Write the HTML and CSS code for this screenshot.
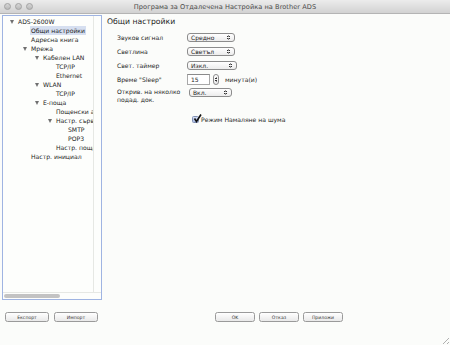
FILE: index.html
```html
<!DOCTYPE html>
<html lang="bg">

<head>
    <meta charset="UTF-8">
    <title>Програма за Отдалечена Настройка на Brother ADS</title>
    <link rel="stylesheet" href="styles.css">
</head>

<body>
    <div class="window">
        <header class="titlebar">
            <div class="lights">
                <span></span><span></span><span></span>
            </div>
            <h1>Програма за Отдалечена Настройка на Brother ADS</h1>
        </header>

        <div class="main">
            <section class="tree">
                <div class="tree-view">
                    <ul>
                        <li class="lvl0 open">ADS-2600W</li>
                        <li class="lvl1 selected">Общи настройки</li>
                        <li class="lvl1">Адресна книга</li>
                        <li class="lvl1 open">Мрежа</li>
                        <li class="lvl2 open">Кабелен LAN</li>
                        <li class="lvl3">TCP/IP</li>
                        <li class="lvl3">Ethernet</li>
                        <li class="lvl2 open">WLAN</li>
                        <li class="lvl3">TCP/IP</li>
                        <li class="lvl2 open">E-поща</li>
                        <li class="lvl3">Пощенски адрес</li>
                        <li class="lvl3 open">Настр. сървър</li>
                        <li class="lvl4">SMTP</li>
                        <li class="lvl4">POP3</li>
                        <li class="lvl3">Настр. поща</li>
                        <li class="lvl1">Настр. инициал</li>
                    </ul>
                    <div class="vscroll"></div>
                </div>
                <div class="hscroll"><span class="thumb"></span></div>
            </section>

            <section class="settings">
                <h2>Общи настройки</h2>
                <div class="form">
                    <label>Звуков сигнал</label>
                    <div class="select">Средно<i></i></div>

                    <label>Светлина</label>
                    <div class="select">Светъл<i></i></div>

                    <label>Свет. таймер</label>
                    <div class="select wide">Изкл.<i></i></div>

                    <label>Време "Sleep"</label>
                    <div class="spin">
                        <span class="field">15</span>
                        <span class="stepper"><i></i></span>
                        <span class="unit">минута(и)</span>
                    </div>

                    <label class="two">Открив. на няколко<br>подад. док.</label>
                    <div class="select narrow top">Вкл.<i></i></div>
                </div>

                <div class="check">
                    <span class="box">
                        <svg width="9" height="9" viewBox="0 0 9 9">
                            <path d="M1.5 4.5 L3.5 7.5 L8 0.5" fill="none" stroke="#111" stroke-width="1.6"/>
                        </svg>
                    </span>
                    Режим Намаляне на шума
                </div>
            </section>
        </div>

        <footer class="footer">
            <div class="left">
                <button>Експорт</button>
                <button>Импорт</button>
            </div>
            <div class="right">
                <button>OK</button>
                <button>Отказ</button>
                <button>Приложи</button>
            </div>
            <span class="grip"></span>
        </footer>
    </div>
</body>

</html>
```

FILE: styles.css
```css
* {
    margin: 0;
    padding: 0;
    box-sizing: border-box;
}

body {
    font-family: "DejaVu Sans", sans-serif;
    color: #1e1e1e;
    background: #fbfcfa;
}

.window {
    width: 450px;
    height: 345px;
    display: flex;
    flex-direction: column;
    position: relative;
    background: #fbfcfa;
}

.titlebar {
    height: 14px;
    background: linear-gradient(#ececec, #d2d2d2);
    border-bottom: 1px solid #b4b4b4;
    display: flex;
    align-items: center;
    position: relative;
}

.lights {
    display: flex;
    gap: 4px;
    padding-left: 4px;
}

.lights span {
    width: 7px;
    height: 7px;
    border-radius: 50%;
    background: linear-gradient(#d6d6d6, #b9b9b9);
    border: 1px solid #a2a2a2;
}

.titlebar h1 {
    position: absolute;
    left: 0;
    right: 0;
    text-align: center;
    font-size: 6.6px;
    font-weight: normal;
    color: #4b4b4b;
    letter-spacing: 0.05px;
}

.main {
    display: flex;
    padding: 1px 0 0 2px;
}

/* tree panel */

.tree {
    width: 100px;
    height: 285px;
    border: 1.5px solid #9fb4e2;
    background: #fdfefc;
    display: flex;
    flex-direction: column;
}

.tree-view {
    flex: 1;
    display: flex;
    overflow: hidden;
}

.tree ul {
    list-style: none;
    width: 91px;
    overflow: hidden;
    padding-top: 1px;
    border-right: 1px solid #e6e8e4;
}

.tree li {
    height: 9px;
    line-height: 9px;
    font-size: 6.1px;
    white-space: nowrap;
    position: relative;
}

.lvl0 { padding-left: 15px; }
.lvl1 { padding-left: 28px; }
.lvl2 { padding-left: 40px; }
.lvl3 { padding-left: 53px; }
.lvl4 { padding-left: 65px; }

.open::before {
    content: "";
    position: absolute;
    top: 2.5px;
    margin-left: -8px;
    border-left: 2px solid transparent;
    border-right: 2px solid transparent;
    border-top: 4px solid #707070;
}

.selected {
    background: linear-gradient(to right, transparent 27px, #d6dff0 27px, #d6dff0 83px, transparent 83px);
}

.vscroll {
    width: 6px;
}

.hscroll {
    height: 7px;
    border-top: 1px solid #e6e8e4;
    padding: 1px 0 0 1px;
}

.thumb {
    display: block;
    width: 56px;
    height: 3.5px;
    border-radius: 2px;
    background: #c3c3c3;
}

/* settings pane */

.settings {
    padding: 2px 0 0 5px;
}

.settings h2 {
    font-size: 7.7px;
    font-weight: normal;
    line-height: 10px;
    margin-bottom: 3px;
}

.form {
    display: grid;
    grid-template-columns: 70px auto;
    grid-auto-rows: 14px;
    align-items: center;
    padding-left: 10px;
    font-size: 6.1px;
}

.form .two {
    line-height: 8px;
    align-self: start;
    padding-top: 2px;
    height: 18px;
}

.select {
    width: 48px;
    height: 9px;
    border: 1px solid #8c8c8c;
    border-radius: 3px;
    background: linear-gradient(#ffffff, #ececec);
    font-size: 6px;
    line-height: 7px;
    padding-left: 3px;
    position: relative;
}

.select i,
.stepper i {
    position: absolute;
    right: 4px;
    top: 1px;
    width: 3px;
    height: 5px;
    background:
        linear-gradient(to bottom right, transparent 50%, #333 50%) left top / 1.5px 2px no-repeat,
        linear-gradient(to bottom left, transparent 50%, #333 50%) right top / 1.5px 2px no-repeat,
        linear-gradient(to top right, transparent 50%, #333 50%) left bottom / 1.5px 2px no-repeat,
        linear-gradient(to top left, transparent 50%, #333 50%) right bottom / 1.5px 2px no-repeat;
}

.select.wide {
    width: 50px;
}

.select.narrow {
    width: 43px;
    margin-left: 2px;
}

.select.top {
    align-self: start;
    margin-top: 2px;
}

.spin {
    display: flex;
    align-items: center;
}

.field {
    width: 23px;
    height: 11px;
    border: 1px solid #a8a8a8;
    border-top-color: #8a8a8a;
    background: #fff;
    font-size: 6px;
    line-height: 9px;
    padding-left: 3px;
}

.stepper {
    width: 6px;
    height: 11px;
    margin-left: 3px;
    border: 1px solid #8c8c8c;
    border-radius: 3px;
    background: linear-gradient(#ffffff, #e8e8e8);
    position: relative;
}

.stepper i {
    right: 0.5px;
    top: 2px;
}

.unit {
    margin-left: 6px;
}

.check {
    display: flex;
    align-items: center;
    margin: 16px 0 0 85px;
    font-size: 6.1px;
}

.box {
    width: 7px;
    height: 7px;
    border: 1px solid #7f8fb4;
    border-radius: 1.5px;
    background: linear-gradient(#d5def3, #a9bbe3);
    margin-right: 2px;
    position: relative;
}

.box svg {
    position: absolute;
    left: 0;
    top: -3px;
}

/* footer buttons */

.footer {
    display: flex;
    padding: 12px 0 0 5px;
}

.footer .left,
.footer .right {
    display: flex;
    gap: 5px;
}

.footer .right {
    margin-left: 117px;
    gap: 4px;
}

.footer button {
    width: 44px;
    height: 10px;
    border: 1px solid #9a9a9a;
    border-radius: 2.5px;
    background: linear-gradient(#ffffff, #e9e9e9);
    font-family: "DejaVu Sans", sans-serif;
    font-size: 4.6px;
    color: #333;
}

.footer .right button {
    width: 40px;
}

.grip {
    position: absolute;
    right: 1px;
    bottom: 1px;
    width: 9px;
    height: 9px;
    background: repeating-linear-gradient(135deg, transparent 0 2px, #b0b0b0 2px 3px);
    clip-path: polygon(100% 0, 100% 100%, 0 100%);
}
```
